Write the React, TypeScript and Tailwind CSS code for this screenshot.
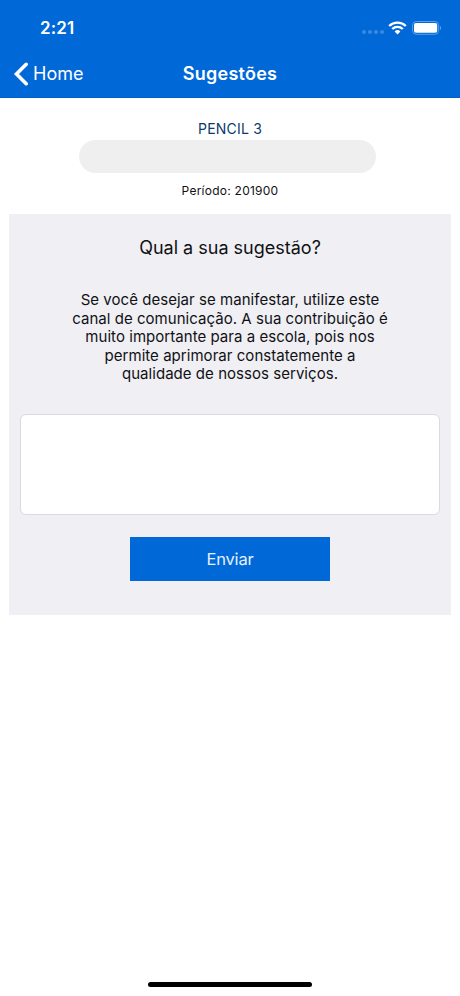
const inter = "font-['Inter','Liberation_Sans',sans-serif]";

export default function App() {
  return (
    <div className={`${inter} flex h-[996px] w-[460px] flex-col overflow-hidden bg-white text-[#111114]`}>
      <header className="flex h-[98px] flex-col border-b border-[#0160c8] bg-[#0168d8] text-white">
        <div className="flex h-[50px] items-center justify-between pt-[6px] pr-[18px] pl-[40px]">
          <span className="pt-[2px] text-[17px] font-semibold tracking-[0.15px]">2:21</span>
          <div className="flex items-center">
            <div className="mr-[4px] flex gap-[2px] pt-[8px]">
              <i className="size-[4px] rounded-full bg-[#3a89e1]" />
              <i className="size-[4px] rounded-full bg-[#3a89e1]" />
              <i className="size-[4px] rounded-full bg-[#3a89e1]" />
              <i className="size-[4px] rounded-full bg-[#3a89e1]" />
            </div>
            <svg width="19" height="14" viewBox="0 0 19 14" fill="none" stroke="white" strokeWidth="2.4">
              <path d="M1.2 5a12 12 0 0 1 16.6 0M4.2 8a7.6 7.6 0 0 1 10.6 0" />
              <path d="M9.5 13.4 6.6 10.5a4.2 4.2 0 0 1 5.8 0Z" fill="white" stroke="none" />
            </svg>
            <svg className="ml-[5px]" width="30" height="14" viewBox="0 0 30 14" fill="none">
              <rect x=".5" y=".5" width="26.2" height="12.8" rx="3.8" stroke="#5c9fe8" />
              <rect x="2" y="2" width="23.2" height="9.8" rx="2" fill="white" />
              <path d="M28 4.8v4.4c1.6-.7 1.6-3.7 0-4.4Z" fill="#5c9fe8" />
            </svg>
          </div>
        </div>
        <nav className="grid h-[47px] grid-cols-[1fr_auto_1fr] items-center px-[13px]">
          <div className="flex items-center gap-[4px]">
            <svg width="16" height="24" viewBox="0 0 16 24" fill="none" stroke="white" strokeWidth="3.6" strokeLinecap="round">
              <path d="M13.2 2.3 3.5 12l9.7 9.7" />
            </svg>
            <span className="text-[18px]">Home</span>
          </div>
          <h1 className="text-[18px] font-semibold tracking-[0.25px]">Sugestões</h1>
        </nav>
      </header>
      <main className="flex flex-col items-center px-[9px] pt-[20px]">
        <p className="h-[22px] text-[14px] leading-[21px] tracking-[0.2px] text-[#0b3a6d]">PENCIL 3</p>
        <div className="mr-[5px] h-[33px] w-[297px] rounded-full bg-[#efefef]" />
        <p className="mt-[9px] h-[18px] text-[12px] leading-[18px] tracking-[0.25px]">Período: 201900</p>
        <section className="mt-[14px] flex h-[401px] w-full flex-col items-center bg-[#efeff4] px-[11px] pt-[20px]">
          <h2 className="h-[27px] text-[18px] leading-[27px]">Qual a sua sugestão?</h2>
          <p className="mt-[30px] h-[94px] text-center text-[15px] leading-[18.6px] tracking-[0.04px] whitespace-nowrap">
            Se você desejar se manifestar, utilize este<br />
            canal de comunicação. A sua contribuição é<br />
            muito importante para a escola, pois nos<br />
            permite aprimorar constatemente a<br />
            qualidade de nossos serviços.
          </p>
          <textarea className="mt-[29px] h-[101px] w-full resize-none rounded-[6px] border border-[#d9dae2] bg-white outline-none" />
          <button className="mt-[22px] h-[44px] w-[200px] bg-[#0168d8] text-[16.5px] tracking-[-0.2px] text-[#e4f1ff]">Enviar</button>
        </section>
      </main>
      <div className="mx-auto mt-auto mb-[9px] h-[5px] w-[164px] rounded-full bg-black" />
    </div>
  );
}
